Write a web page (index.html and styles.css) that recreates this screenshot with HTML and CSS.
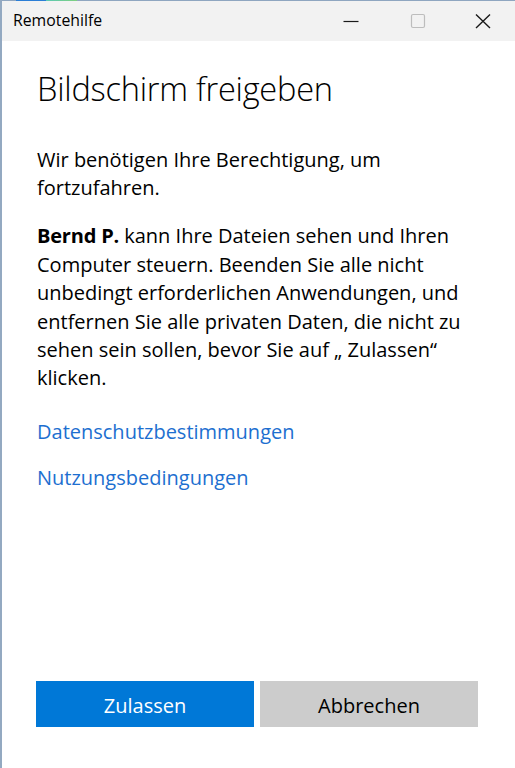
FILE: index.html
```html
<!DOCTYPE html>
<html lang="de">
<head>
<meta charset="utf-8">
<title>Remotehilfe</title>
<link rel="stylesheet" href="styles.css">
</head>
<body>
<div class="window">
  <div class="topline"></div>
  <div class="titlebar">
    <span class="title">Remotehilfe</span>
    <div class="caption">
      <span class="cbtn">
        <svg width="16" height="16" viewBox="0 0 16 16"><path d="M0.5 8.5H15.5" stroke="#1a1a1a" stroke-width="1.2" fill="none"/></svg>
      </span>
      <span class="cbtn">
        <svg width="16" height="16" viewBox="0 0 16 16"><rect x="1.5" y="1.5" width="13" height="13" rx="1.5" stroke="#bdbdbd" stroke-width="1.2" fill="none"/></svg>
      </span>
      <span class="cbtn">
        <svg width="16" height="16" viewBox="0 0 16 16"><path d="M1 1.5L15 15M15 1.5L1 15" stroke="#1a1a1a" stroke-width="1.4" fill="none"/></svg>
      </span>
    </div>
  </div>
  <div class="content">
    <h1 class="heading">Bildschirm freigeben</h1>
    <p class="text intro">Wir benötigen Ihre Berechtigung, um fortzufahren.</p>
    <p class="text detail"><b class="name">Bernd P.</b> kann Ihre Dateien sehen und Ihren Computer steuern. Beenden Sie alle nicht unbedingt erforderlichen Anwendungen, und entfernen Sie alle privaten Daten, die nicht zu sehen sein sollen, bevor Sie auf „ Zulassen“ klicken.</p>
    <a class="link first" href="#">Datenschutzbestimmungen</a>
    <a class="link second" href="#">Nutzungsbedingungen</a>
  </div>
  <div class="actions">
    <button class="btn primary">Zulassen</button>
    <button class="btn secondary">Abbrechen</button>
  </div>
</div>
</body>
</html>
```
FILE: styles.css
```css
html, body {
  margin: 0;
  padding: 0;
  background: #ffffff;
}
body {
  font-family: "Open Sans", "Noto Sans", sans-serif;
  color: #000;
}
.window {
  height: 100vh;
  box-sizing: border-box;
  border-left: 2px solid #93a9c1;
  display: flex;
  flex-direction: column;
}
.topline {
  height: 1px;
  flex: none;
  background: linear-gradient(to right, #8fa6c0 0, #8fa6c0 14px, #2b7ed6 14px, #2b7ed6 44px, #5cc8b4 44px, #7ed080 75px, #8fa6c0 75px, #8fa6c0 100%);
}
.titlebar {
  height: 40px;
  flex: none;
  background: #f2f2f2;
  display: flex;
  align-items: center;
  justify-content: space-between;
}
.title {
  font-size: 15.8px;
  padding-left: 11px;
  margin-top: -2px;
  color: #000;
}
.caption {
  display: flex;
  height: 100%;
}
.cbtn {
  width: 67px;
  display: flex;
  align-items: center;
  justify-content: center;
}
.caption .cbtn:last-child {
  width: 64px;
}
.content {
  flex: 1;
  display: flex;
  flex-direction: column;
  align-items: flex-start;
  padding: 0 37px 0 35px;
}
.heading {
  margin: 28px 0 0;
  font-size: 32.6px;
  font-weight: 300;
  line-height: 40px;
  letter-spacing: -0.25px;
}
.text {
  margin: 0;
  font-size: 20px;
  line-height: 28.4px;
}
.text .name {
  font-weight: 700;
  letter-spacing: -0.2px;
}
.intro {
  margin-top: 37px;
}
.detail {
  margin-top: 19.5px;
}
.link {
  font-size: 20px;
  line-height: 28.4px;
  color: #1d6fd0;
  text-decoration: none;
}
.link.first {
  margin-top: 25.5px;
}
.link.second {
  margin-top: 17.6px;
}
.actions {
  flex: none;
  display: flex;
  gap: 6px;
  padding: 0 0 41px 34px;
}
.btn {
  width: 218px;
  height: 46px;
  border: none;
  margin: 0;
  font-family: "Open Sans", "Noto Sans", sans-serif;
  font-size: 20px;
  padding: 3px 0 0;
  cursor: pointer;
}
.btn.primary {
  background: #0078d7;
  color: #fff;
}
.btn.secondary {
  background: #cccccc;
  color: #000;
}
```
